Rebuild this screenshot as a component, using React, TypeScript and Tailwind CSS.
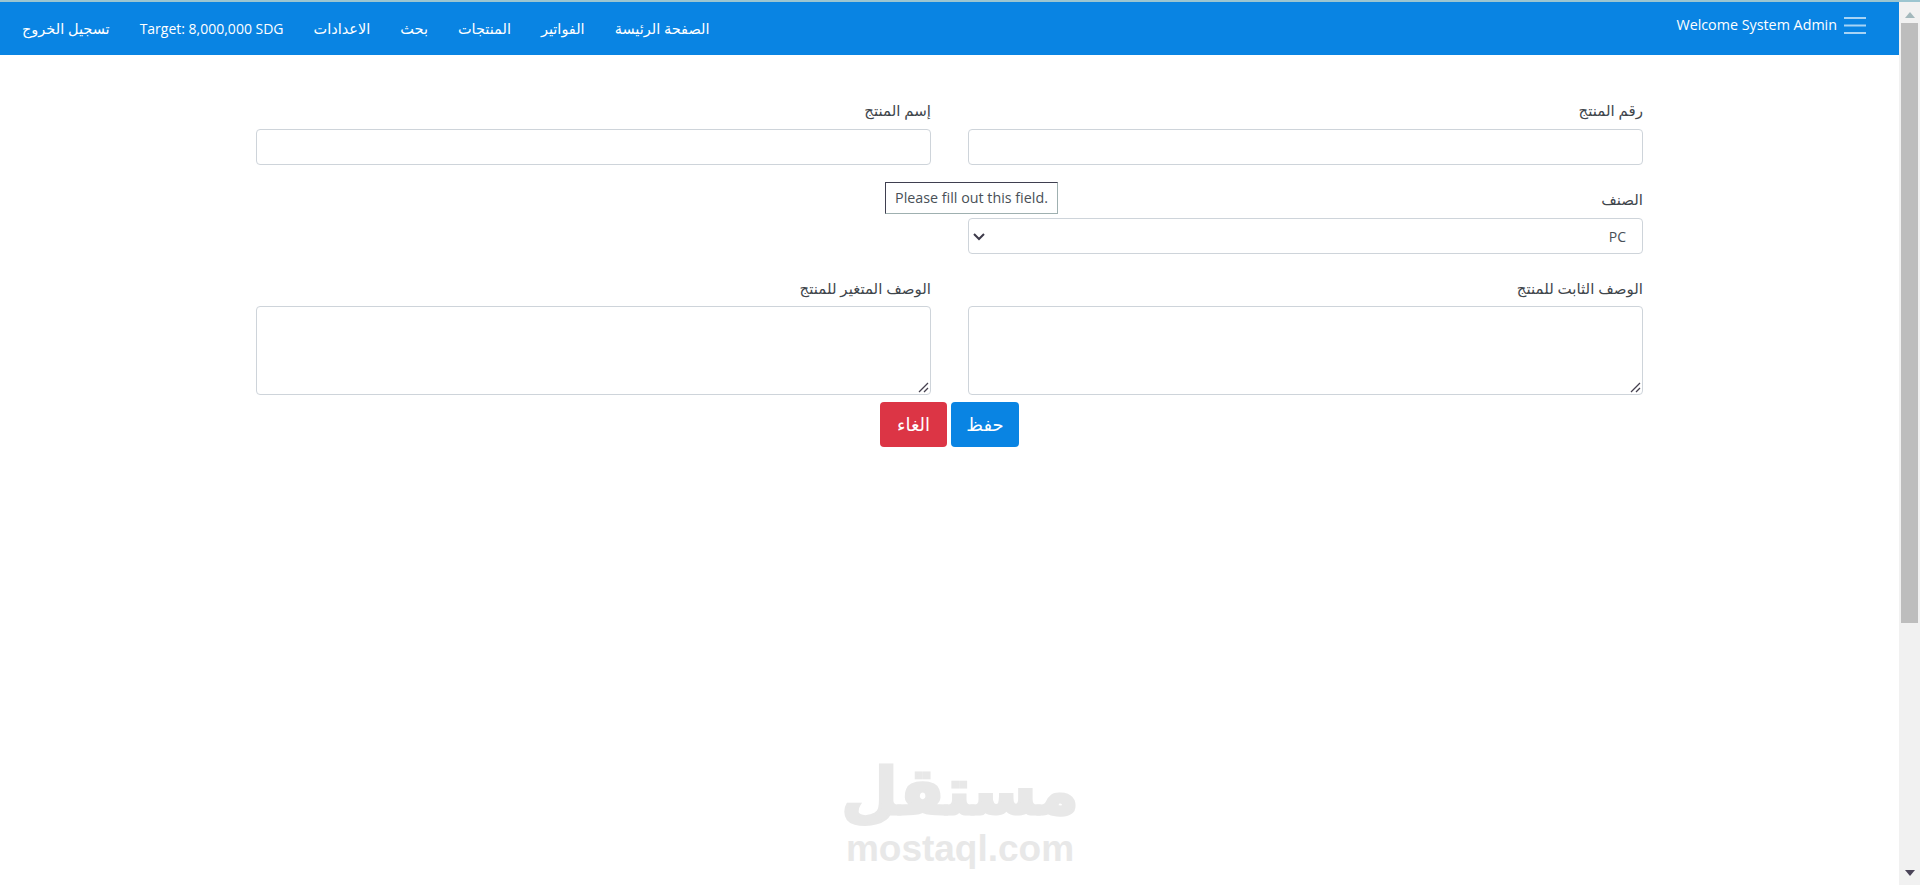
const navItems = ['الصفحة الرئيسة', 'الفواتير', 'المنتجات', 'بحث', 'الاعدادات', 'Target: 8,000,000 SDG', 'تسجيل الخروج'];

function Field({ label, children }: { label: string; children: React.ReactNode }) {
  return (
    <div className="flex flex-col">
      <label className="mb-2 h-6 pt-px text-right text-[15px] leading-6 text-[#3f464c]">{label}</label>
      {children}
    </div>
  );
}

function AreaField({ label }: { label: string }) {
  return (
    <Field label={label}>
      <div className="relative -mt-px h-[89px]">
        <textarea className="h-full w-full resize-none rounded border border-[#ced4da] bg-white px-3 py-2 text-[14px] text-[#495057] outline-none" />
        {/* resize grip */}
        <svg width="11" height="11" viewBox="0 0 11 11" className="pointer-events-none absolute bottom-[2px] right-[2px]" stroke="#45404f" strokeWidth="1.3" fill="none">
          <path d="M1 10L10 1M6 10l4-4" />
        </svg>
      </div>
    </Field>
  );
}

const inputClass = 'h-9 w-full rounded border border-[#ced4da] bg-white px-3 text-[14px] text-[#495057] outline-none';

export default function App() {
  return (
    <div className="relative flex h-[885px] flex-col overflow-hidden bg-white font-['Open_Sans','DejaVu_Sans',sans-serif]">
      <div className="h-0.5 shrink-0 bg-[#9cc5d0]" />
      <div className="flex min-h-0 flex-1">
        <main className="relative min-w-0 flex-1">
          <nav className="flex h-[53px] items-center justify-between bg-[#0984e3] pl-[7px] pr-[33px] text-white">
            <ul className="flex flex-row-reverse items-center">
              {navItems.map(item => (
                <li key={item} className={`px-[15px] leading-[53px] ${item.startsWith('Target') ? 'text-[14px]' : 'text-[14.5px]'}`}>{item}</li>
              ))}
            </ul>
            <div className="mb-2 flex items-center gap-[7px] text-[14.3px]">
              <span>Welcome System Admin</span>
              <svg width="22" height="18" viewBox="0 0 22 18" fill="none" stroke="#a8d4f5" strokeWidth="2">
                <path d="M0 2h22M0 9.5h22M0 17h22" />
              </svg>
            </div>
          </nav>

          <form dir="rtl" className="mx-auto mt-[42px] grid w-[1387px] grid-cols-2 gap-x-[37px] gap-y-[21px]">
            <Field label="رقم المنتج"><input className={inputClass} /></Field>
            <Field label="إسم المنتج"><input className={inputClass} /></Field>
            <Field label="الصنف">
              <div className="relative">
                <select className={`${inputClass} appearance-none pr-4`} defaultValue="PC">
                  <option>PC</option>
                </select>
                <svg width="12" height="8" viewBox="0 0 12 8" className="pointer-events-none absolute left-[5px] top-[15px]" fill="none" stroke="#3d3a4a" strokeWidth="2">
                  <path d="M1 1l5 5 5-5" />
                </svg>
              </div>
            </Field>
            <div />
            <AreaField label="الوصف الثابت للمنتج" />
            <AreaField label="الوصف المتغير للمنتج" />
          </form>

          <div dir="rtl" className="mt-[7px] flex justify-center gap-1">
            <button className="h-[45px] w-[68px] rounded bg-[#0984e3] text-[18px] text-white">حفظ</button>
            <button className="h-[45px] w-[67px] rounded bg-[#dc3545] text-[18px] text-white">الغاء</button>
          </div>

          {/* validation bubble */}
          <div className="absolute left-[885px] top-[180px] flex h-8 w-[173px] items-center justify-center border border-b-[#9fb0b0] border-l-[#3f3f50] border-r-[#9fb0b0] border-t-[#3f3f50] bg-white text-[14.3px] text-[#495057]">
            Please fill out this field.
          </div>

          {/* watermark */}
          <div className="absolute left-[845px] top-[745px] flex w-[230px] flex-col items-center text-[#e8e8e8]">
            <span className="text-[65px] font-bold leading-[85px] [-webkit-text-stroke:3px_#e8e8e8]">مستقل</span>
            <span className="font-['Liberation_Sans',sans-serif] text-[37px] font-bold leading-[34px]">mostaql.com</span>
          </div>
        </main>

        <aside className="flex w-[21px] shrink-0 flex-col items-center bg-[#f1f1f1]">
          <svg width="10" height="6" viewBox="0 0 10 6" className="mt-[10px] fill-[#a3b8bc]">
            <path d="M5 0l5 6H0z" />
          </svg>
          <div className="mt-[5px] h-[600px] w-[17px] bg-[#bdbdbd]" />
          <svg width="10" height="6" viewBox="0 0 10 6" className="mb-[9px] mt-auto fill-[#4a4458]">
            <path d="M0 0h10L5 6z" />
          </svg>
        </aside>
      </div>
    </div>
  );
}
